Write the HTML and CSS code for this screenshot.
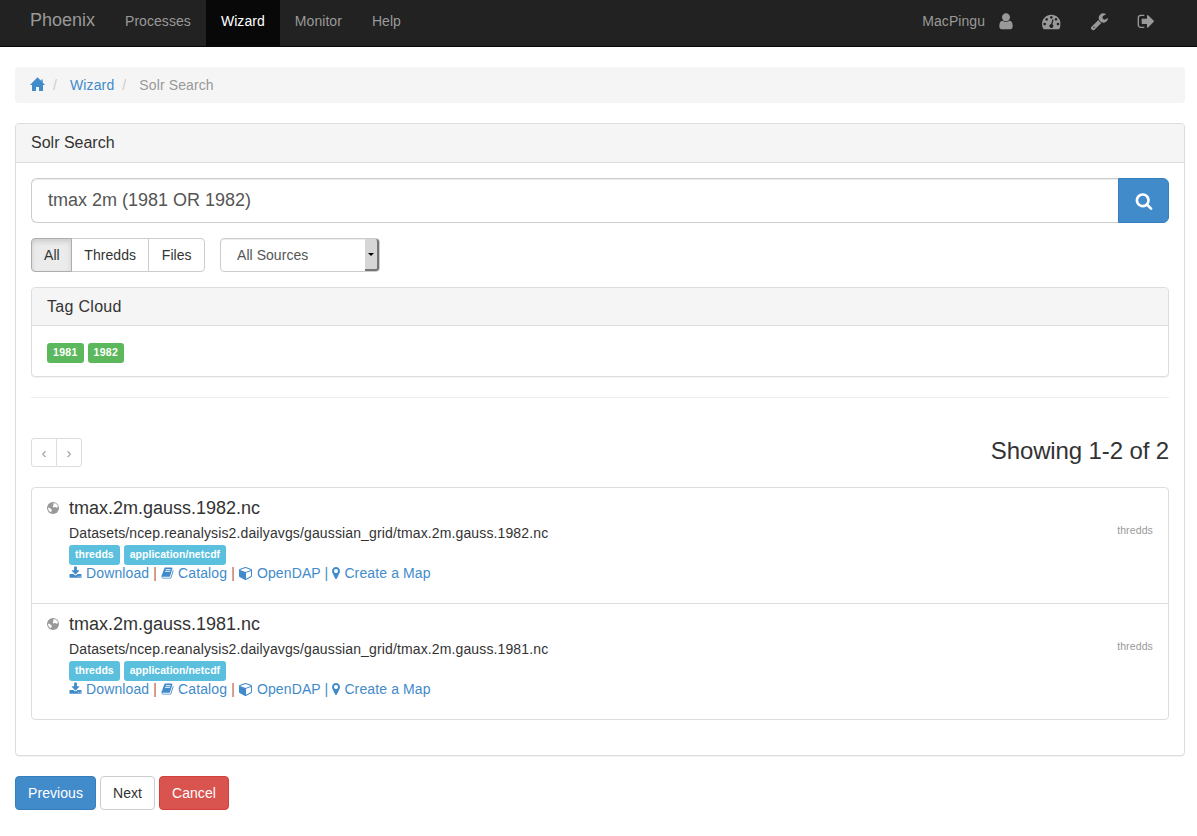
FILE: index.html
```html
<!DOCTYPE html>
<html lang="en">
<head>
  <meta charset="UTF-8">
  <title>Phoenix - Solr Search</title>
  <link rel="stylesheet" href="styles.css">
</head>
<body>
  <svg class="sprite">
    <symbol id="user" viewBox="256 0 1280 1792"><path d="M1536 1399q0 109-62.5 187t-150.5 78h-854q-88 0-150.5-78t-62.5-187q0-85 8.5-160.5t31.5-152 58.5-131 94-89 134.5-34.5q131 128 313 128t313-128q76 0 134.5 34.5t94 89 58.5 131 31.5 152 8.5 160.5zm-256-887q0 159-112.5 271.5t-271.5 112.5-271.5-112.5-112.5-271.5 112.5-271.5 271.5-112.5 271.5 112.5 112.5 271.5z"/></symbol>
    <symbol id="dashboard" viewBox="0 0 1792 1792"><path d="M384 1152q0-53-37.5-90.5t-90.5-37.5-90.5 37.5-37.5 90.5 37.5 90.5 90.5 37.5 90.5-37.5 37.5-90.5zm192-448q0-53-37.5-90.5t-90.5-37.5-90.5 37.5-37.5 90.5 37.5 90.5 90.5 37.5 90.5-37.5 37.5-90.5zm428 481l101-382q6-26-7.5-48.5t-38.5-29.5-48 6.5-30 39.5l-101 382q-60 5-107 43.5t-63 98.5q-20 77 20 146t117 89 146-20 89-117q16-60-6-117t-72-91zm660-33q0-53-37.5-90.5t-90.5-37.5-90.5 37.5-37.5 90.5 37.5 90.5 90.5 37.5 90.5-37.5 37.5-90.5zm-640-640q0-53-37.5-90.5t-90.5-37.5-90.5 37.5-37.5 90.5 37.5 90.5 90.5 37.5 90.5-37.5 37.5-90.5zm448 192q0-53-37.5-90.5t-90.5-37.5-90.5 37.5-37.5 90.5 37.5 90.5 90.5 37.5 90.5-37.5 37.5-90.5zm320 448q0 261-141 483-19 29-54 29h-1402q-35 0-54-29-141-221-141-483 0-182 71-348t191-286 286-191 348-71 348 71 286 191 191 286 71 348z"/></symbol>
    <symbol id="wrench" viewBox="0 0 1792 1792"><path d="M448 1472q0-26-19-45t-45-19-45 19-19 45 19 45 45 19 45-19 19-45zm644-420l-682 682q-37 37-90 37-52 0-91-37l-106-108q-38-36-38-90 0-53 38-91l681-681q39 98 114.5 173.5t173.5 114.5zm634-435q0 39-23 106-47 134-164.5 217.5t-258.5 83.5q-185 0-316.5-131.5t-131.5-316.5 131.5-316.5 316.5-131.5q58 0 121.5 16.5t107.5 46.5q16 11 16 28t-16 28l-293 169v224l193 107q5-3 79-48.5t135.5-81 70.5-35.5q15 0 23.5 10t8.5 25z"/></symbol>
    <symbol id="signout" viewBox="0 0 1792 1792"><path d="M704 1440q0 4 1 20t.5 26.5-3 23.5-10 19.5-20.5 6.5h-320q-119 0-203.5-84.5t-84.5-203.5v-704q0-119 84.5-203.5t203.5-84.5h320q13 0 22.5 9.5t9.5 22.5q0 4 1 20t.5 26.5-3 23.5-10 19.5-20.5 6.5h-320q-66 0-113 47t-47 113v704q0 66 47 113t113 47h312l11.5 1 11.5 3 8 5.5 7 9 2 13.5zm928-544q0 26-19 45l-544 544q-19 19-45 19t-45-19-19-45v-288h-448q-26 0-45-19t-19-45v-384q0-26 19-45t45-19h448v-288q0-26 19-45t45-19 45 19l544 544q19 19 19 45z"/></symbol>
    <symbol id="home" viewBox="0 0 15 15"><path d="M7.5 0.2L0 8h2v6h4v-4h3v4h4V8h2l-2.300-2.400V2.500h-1.400v1.600z"/></symbol>
    <symbol id="search" viewBox="0 0 1792 1792"><path d="M1216 832q0-185-131.5-316.5t-316.5-131.5-316.5 131.5-131.5 316.5 131.5 316.5 316.5 131.5 316.5-131.5 131.5-316.5zm512 832q0 52-38 90t-90 38q-54 0-90-38l-343-342q-179 124-399 124-143 0-273.5-55.5t-225-150-150-225-55.5-273.5 55.5-273.5 150-225 225-150 273.5-55.5 273.5 55.5 225 150 150 225 55.5 273.5q0 220-124 399l343 343q37 37 37 90z"/></symbol>
    <symbol id="globe" viewBox="0 0 12 12"><circle cx="6" cy="6" r="6"/><path fill="#fff" d="M6.2 1.200l2.600.3 1.900 2 .2 1.700-1.200.6-1.500-.9-1.600.7-1-1.200.9-1.300zM1.200 5.600l1.600.5 1.800 1.300.2 1.300-1.300 1.500L2.200 9 1.200 7.400z"/></symbol>
    <symbol id="download" viewBox="0 0 1792 1792"><path d="M1344 1344q0-26-19-45t-45-19-45 19-19 45 19 45 45 19 45-19 19-45zm256 0q0-26-19-45t-45-19-45 19-19 45 19 45 45 19 45-19 19-45zm128-224v320q0 40-28 68t-68 28h-1472q-40 0-68-28t-28-68v-320q0-40 28-68t68-28h465l135 136q58 56 136 56t136-56l136-136h464q40 0 68 28t28 68zm-325-569q17 41-14 70l-448 448q-18 19-45 19t-45-19l-448-448q-31-29-14-70 17-39 59-39h256v-448q0-26 19-45t45-19h256q26 0 45 19t19 45v448h256q42 0 59 39z"/></symbol>
    <symbol id="book" viewBox="0 0 1792 1792"><path d="M1703 478q40 57 18 129l-275 906q-19 64-76.5 107.5t-122.5 43.5h-923q-77 0-148.5-53.5t-99.5-131.5q-24-67-2-127 0-4 3-27t4-37q1-8-3-21.5t-3-19.5q2-11 8-21t16.5-23.5 16.5-23.5q23-38 45-91.5t30-91.5q3-10 .5-30t-.5-28q3-11 17-28t17-23q21-36 42-92t25-90q1-9-2.5-32t.5-28q4-13 22-30.5t22-22.5q19-26 42.5-84.5t27.5-96.5q1-8-3-25.5t-2-26.5q2-8 9-18t18-23 17-21q8-12 16.5-30.5t15-35 16-36 19.5-32 26.5-23.5 36-11.5 47.5 5.5l-1 3q38-9 51-9h761q74 0 114 56t18 130l-274 906q-36 119-71.5 153.5t-128.5 34.5h-869q-27 0-38 15-11 16-1 43 24 70 144 70h923q29 0 56-15.5t35-41.5l300-987q7-22 5-57 38 15 59 43zm-1064 2q-4 13 2 22.5t20 9.5h608q13 0 25.5-9.5t16.5-22.5l21-64q4-13-2-22.5t-20-9.5h-608q-13 0-25.5 9.5t-16.5 22.5zm-83 256q-4 13 2 22.5t20 9.5h608q13 0 25.5-9.5t16.5-22.5l21-64q4-13-2-22.5t-20-9.5h-608q-13 0-25.5 9.5t-16.5 22.5z"/></symbol>
    <symbol id="cube" viewBox="0 0 1792 1792"><path d="M896 1629l640-349v-636l-640 233v752zm-64-865l698-254-698-254-698 254zm832-252v768q0 35-18 65t-49 47l-704 384q-28 16-61 16t-61-16l-704-384q-31-17-49-47t-18-65v-768q0-40 23-73t61-47l704-256q22-8 44-8t44 8l704 256q38 14 61 47t23 73z"/></symbol>
    <symbol id="marker" viewBox="384 0 1024 1792"><path d="M1152 640q0-106-75-181t-181-75-181 75-75 181 75 181 181 75 181-75 75-181zm256 0q0 109-33 179l-364 774q-16 33-47.5 52t-67.5 19-67.5-19-46.5-52l-365-774q-33-70-33-179 0-212 150-362t362-150 362 150 150 362z"/></symbol>
  </svg>

  <nav class="navbar">
    <a class="brand" href="#">Phoenix</a>
    <ul class="nav">
      <li><a href="#">Processes</a></li>
      <li class="active"><a href="#">Wizard</a></li>
      <li><a href="#">Monitor</a></li>
      <li><a href="#">Help</a></li>
    </ul>
    <div class="nav-right">
      <span>MacPingu</span>
      <a href="#"><svg class="user"><use href="#user"/></svg></a>
      <a href="#"><svg><use href="#dashboard"/></svg></a>
      <a href="#"><svg><use href="#wrench"/></svg></a>
      <a href="#"><svg><use href="#signout"/></svg></a>
    </div>
  </nav>

  <div class="container">
    <ol class="breadcrumb">
      <li><a href="#"><svg class="home"><use href="#home"/></svg></a></li>
      <li><a href="#">Wizard</a></li>
      <li>Solr Search</li>
    </ol>

    <div class="panel main-panel">
      <div class="panel-heading"><h3>Solr Search</h3></div>
      <div class="panel-body">
        <form class="search">
          <input type="text" value="tmax 2m (1981 OR 1982)">
          <button type="button"><svg><use href="#search"/></svg></button>
        </form>

        <div class="filters">
          <div class="btn-group">
            <button class="btn active">All</button>
            <button class="btn">Thredds</button>
            <button class="btn">Files</button>
          </div>
          <div class="select"><span>All Sources</span><i class="select-arrow"></i></div>
        </div>

        <div class="panel tags">
          <div class="panel-heading"><h3>Tag Cloud</h3></div>
          <div class="panel-body">
            <span class="label success">1981</span>
            <span class="label success">1982</span>
          </div>
        </div>

        <hr>

        <div class="results-head">
          <div class="pager"><a href="#">&lsaquo;</a><a href="#">&rsaquo;</a></div>
          <h2>Showing 1-2 of 2</h2>
        </div>

        <ul class="list">
          <li>
            <svg class="globe"><use href="#globe"/></svg>
            <div class="item">
              <h4>tmax.2m.gauss.1982.nc</h4>
              <p>Datasets/ncep.reanalysis2.dailyavgs/gaussian_grid/tmax.2m.gauss.1982.nc</p>
              <div class="labels"><span class="label info">thredds</span><span class="label info">application/netcdf</span></div>
              <div class="links">
                <a href="#"><svg><use href="#download"/></svg> Download</a> <b>|</b>
                <a href="#"><svg><use href="#book"/></svg> Catalog</a> <b>|</b>
                <a href="#"><svg class="cube"><use href="#cube"/></svg> OpenDAP</a> <b class="blue">|</b>
                <a href="#"><svg class="marker"><use href="#marker"/></svg> Create a Map</a>
              </div>
            </div>
            <small>thredds</small>
          </li>
          <li>
            <svg class="globe"><use href="#globe"/></svg>
            <div class="item">
              <h4>tmax.2m.gauss.1981.nc</h4>
              <p>Datasets/ncep.reanalysis2.dailyavgs/gaussian_grid/tmax.2m.gauss.1981.nc</p>
              <div class="labels"><span class="label info">thredds</span><span class="label info">application/netcdf</span></div>
              <div class="links">
                <a href="#"><svg><use href="#download"/></svg> Download</a> <b>|</b>
                <a href="#"><svg><use href="#book"/></svg> Catalog</a> <b>|</b>
                <a href="#"><svg class="cube"><use href="#cube"/></svg> OpenDAP</a> <b class="blue">|</b>
                <a href="#"><svg class="marker"><use href="#marker"/></svg> Create a Map</a>
              </div>
            </div>
            <small>thredds</small>
          </li>
        </ul>
      </div>
    </div>

    <div class="actions">
      <button class="btn primary">Previous</button>
      <button class="btn">Next</button>
      <button class="btn danger">Cancel</button>
    </div>
  </div>
</body>
</html>
```

FILE: styles.css
```css
* { box-sizing: border-box; }
body { margin: 0; font: 14px/20px "Liberation Sans", Arial, sans-serif; letter-spacing: .12px; color: #333; background: #fff; }
a { color: #428bca; text-decoration: none; }
ul, ol { list-style: none; margin: 0; padding: 0; }
h2, h3, h4, p { margin: 0; font-weight: normal; }
h3, h4 { letter-spacing: 0; }
svg { fill: currentColor; flex: none; }
button, input { font: inherit; }
button { letter-spacing: .05px; }
.sprite { display: none; }

/* navbar */
.navbar { display: flex; height: 47px; padding: 0 26px 0 15px; background: #222; border-bottom: 1px solid #080808; color: #999; letter-spacing: .06px; }
.navbar a { color: #999; }
.brand { width: 95px; padding: 10px 15px; font-size: 18px; letter-spacing: 0; }
.nav { display: flex; }
.nav a { display: block; height: 46px; padding: 11px 15px; }
.nav .active a { color: #fff; background: #080808; }
.nav-right { display: flex; margin-left: auto; }
.nav-right span { padding: 11px 0; }
.nav-right a { padding: 12px 15px 0 14px; }
.nav-right svg { display: block; width: 18.67px; height: 18.67px; }
.nav-right .user { width: 14px; }

.container { padding: 20px 12px 0 15px; }
.breadcrumb { display: flex; height: 36px; padding: 8px 15px; background: #f5f5f5; border-radius: 4px; color: #999; }
.breadcrumb li + li::before { content: "/"; padding: 0 13px 0 8px; color: #ccc; }
.home { display: block; width: 15px; height: 15px; margin-top: 2px; }

/* panels */
.panel { border: 1px solid #ddd; border-radius: 4px; background: #fff; box-shadow: 0 1px 1px rgba(0, 0, 0, .05); }
.main-panel { height: 633px; margin-top: 20px; }
.panel-heading { height: 39px; padding: 9px 15px; background: #f5f5f5; border-bottom: 1px solid #ddd; border-radius: 3px 3px 0 0; }
.panel-heading h3 { font-size: 16px; line-height: 20px; }
.panel-body { padding: 15px; }

.search { display: flex; height: 45px; }
.search input { flex: 1; padding: 9px 16px 11px; font-size: 18px; color: #555; border: 1px solid #ccc; border-right: 0; border-radius: 6px 0 0 6px; box-shadow: inset 0 1px 1px rgba(0, 0, 0, .075); }
.search button { display: flex; align-items: center; justify-content: center; width: 51px; padding: 0; color: #fff; background: #428bca; border: 1px solid #357ebd; border-radius: 0 6px 6px 0; }
.search svg { width: 18px; height: 18px; }

.filters { display: flex; gap: 15px; margin-top: 15px; }
.btn { height: 34px; padding: 0 12px; border: 1px solid #ccc; border-radius: 4px; background: #fff; color: #333; }
.btn-group { display: flex; width: 174px; }
.btn-group .btn { flex: auto; margin-left: -1px; border-radius: 0; }
.btn-group .btn:first-child { flex: none; width: 41px; margin-left: 0; border-radius: 4px 0 0 4px; }
.btn-group .btn:last-child { border-radius: 0 4px 4px 0; }
.btn.active { z-index: 1; background: #ebebeb; border-color: #adadad; box-shadow: inset 0 3px 5px rgba(0, 0, 0, .125); }
.select { display: flex; width: 160px; height: 34px; padding: 0 0 0 16px; line-height: 32px; letter-spacing: .05px; color: #555; border: 1px solid #ccc; border-radius: 4px; box-shadow: inset 0 1px 1px rgba(0, 0, 0, .075); }
.select-arrow { display: flex; align-items: center; justify-content: center; width: 14px; margin-left: auto; background: #d6d6d6; border: solid #757575; border-width: 0 2px 2px 0; border-radius: 0 3px 3px 0; }
.select-arrow::after { content: ""; margin-top: 1px; border: 3px solid transparent; border-top-color: #000; border-bottom: 0; }

.tags { height: 90px; margin-top: 15px; }
.tags .panel-heading { height: 38px; }
.tags h3 { letter-spacing: .3px; }
.tags .panel-body { display: flex; gap: 4px; padding-top: 17px; }
.label { height: 20px; padding: 0 6px; font-size: 10.5px; font-weight: bold; line-height: 19px; letter-spacing: .03px; color: #fff; border-radius: 3px; }
.success { background: #5cb85c; letter-spacing: .3px; }
.info { background: #5bc0de; }

hr { height: 1px; margin: 20px 0 40px; border: 0; background: #eee; }

/* results */
.results-head { display: flex; justify-content: space-between; height: 29px; }
.results-head h2 { font-size: 24px; line-height: 26px; letter-spacing: -.12px; }
.pager { display: flex; }
.pager a { width: 26px; height: 29px; border: 1px solid #ddd; border-radius: 3px 0 0 3px; font-size: 15px; line-height: 27px; text-align: center; color: #999; }
.pager a + a { margin-left: -1px; border-radius: 0 3px 3px 0; }
.list { margin-top: 20px; border: 1px solid #ddd; border-radius: 4px; }
.list li { display: flex; height: 115px; padding: 10px 15px; }
.list li + li { height: 116px; border-top: 1px solid #ddd; }
.globe { width: 12px; height: 12px; margin: 4px 10px 0 0; color: #999; }
.item { flex: 1; }
.item h4 { font-size: 18px; line-height: 20px; }
.item p { margin-top: 5px; letter-spacing: .13px; }
.labels { display: flex; gap: 4px; margin-top: 2px; }
.links { margin-top: -2px; color: #428bca; white-space: nowrap; }
.links svg { width: 13px; height: 14px; vertical-align: -2px; }
.links .cube { width: 14px; }
.links .marker { width: 8px; }
.links b { font-weight: normal; color: #c0603a; }
.links .blue { color: #428bca; }
.list small { margin-top: 22px; font-size: 10.5px; color: #999; }

.actions { display: flex; gap: 4px; margin-top: 20px; }
.primary { width: 81px; color: #fff; background: #428bca; border-color: #357ebd; }
.danger { color: #fff; background: #d9534f; border-color: #d43f3a; }
```
